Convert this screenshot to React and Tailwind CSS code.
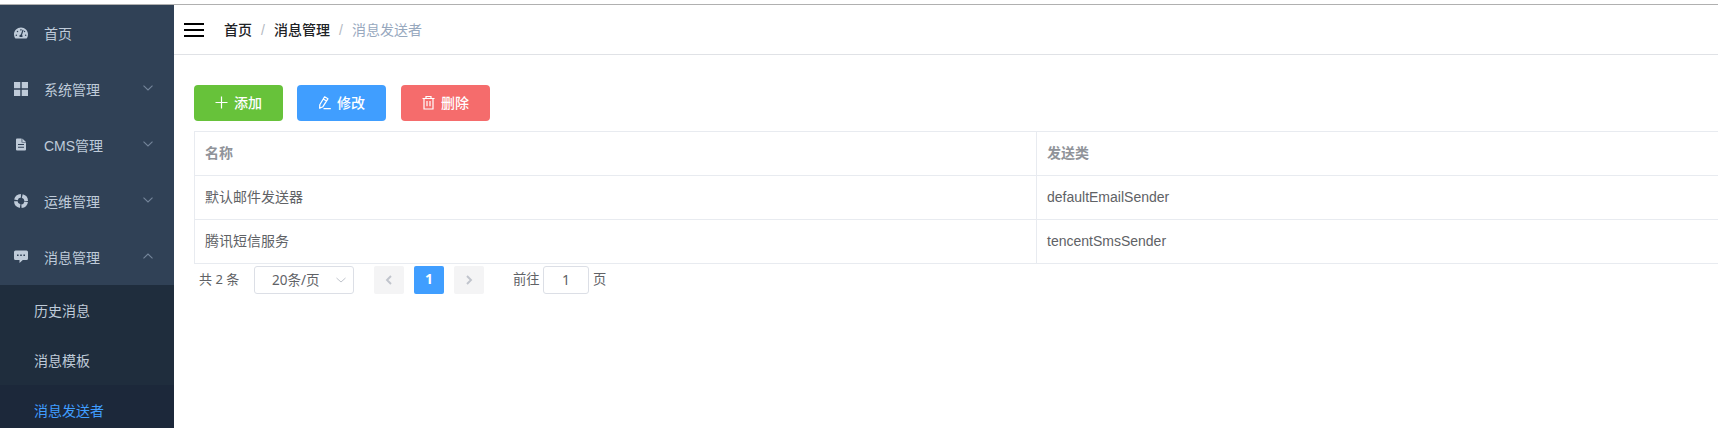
import { FaTachometerAlt } from "react-icons/fa";

const Chevron = ({ up }) => (
  <svg className="mb-0.5 h-3 w-3" viewBox="0 0 12 12" fill="none" stroke="#74859a" strokeWidth="1.1">
    <path d={up ? "M1.500 8.300L6 4l4.500 4.300" : "M1.500 3.700L6 8l4.500-4.300"} />
  </svg>
);

const Grid = () => (
  <svg className="h-3.5 w-3.5" viewBox="0 0 14 14" fill="#bfcbd9">
    <path d="M0 0h6.300v6.300H0zM7.700 0H14v6.300H7.700zM0 7.700h6.300V14H0zM7.700 7.700H14V14H7.700z" />
  </svg>
);

const Doc = () => (
  <svg className="h-3.5 w-3.5" viewBox="0 0 14 14" fill="#bfcbd9">
    <path fillRule="evenodd" d="M3 .5h4.600v4H12v7a1 1 0 0 1-1 1H3a1 1 0 0 1-1-1v-10a1 1 0 0 1 1-1zM4 6.100v1h6v-1zM4 8.800v1h6v-1z" />
    <path d="M8.300 .5L12 3.900H8.300z" />
  </svg>
);

const Ring = () => (
  <svg className="h-3.5 w-3.5" viewBox="0 0 14 14" fill="none" stroke="#bfcbd9" strokeWidth="3.600">
    <circle cx="7" cy="7" r="5.200" strokeDasharray="6.768 1.400" strokeDashoffset="-0.7" />
  </svg>
);

const Chat = () => (
  <svg className="h-3.5 w-3.5" viewBox="0 0 14 14">
    <path fill="#bfcbd9" d="M1.500 .5h11A1.500 1.500 0 0 1 14 2v6.500A1.500 1.500 0 0 1 12.500 10H8.800L5.500 13v-3h-4A1.500 1.500 0 0 1 0 8.500V2A1.500 1.500 0 0 1 1.500 .5z" />
    <path fill="#304156" d="M3 4.500h1.600v1.600H3zM6.200 4.500h1.600v1.600H6.200zM9.400 4.500H11v1.600H9.400z" />
  </svg>
);

const Plus = () => (
  <svg className="h-3.5 w-3.5" viewBox="0 0 14 14" fill="none" stroke="#fff" strokeWidth="1.200">
    <path d="M6.500 .5v12M.5 6.500h12" />
  </svg>
);

const Edit = () => (
  <svg className="h-3.5 w-3.5" viewBox="0 0 14 14" fill="none" stroke="#fff" strokeWidth="1.250" strokeLinejoin="round">
    <path d="M6.600 .8l3.300 2-5 7.900-3.200 1.600.1-3.600zM5.300 3l3.200 2M5.500 12.500h7.300" />
  </svg>
);

const Trash = () => (
  <svg className="h-3.5 w-3.5" viewBox="0 0 14 14" fill="none" stroke="#fff" strokeWidth="1.200">
    <path d="M.5 2.500h12M4 2.500v-2h5v2M2 2.500v10.500h9V2.500M5 5v5.300M8 5v5.300" />
  </svg>
);

const menu = [
  { label: "首页", icon: <FaTachometerAlt className="h-3.5 w-3.5" /> },
  { label: "系统管理", icon: <Grid />, arrow: true },
  { label: "CMS管理", icon: <Doc />, arrow: true },
  { label: "运维管理", icon: <Ring />, arrow: true },
  { label: "消息管理", icon: <Chat />, arrow: true, open: true },
];

const Button = ({ color, icon, children }) => (
  <button className={`flex h-9 w-[89px] items-center justify-center gap-[5px] rounded-[4px] text-white ${color}`}>
    {icon}
    <span>{children}</span>
  </button>
);

const Row = ({ cells, head }) => (
  <div className={`flex h-11 border-b border-[#e8ebf0] ${head ? "font-bold text-[#909399]" : ""}`}>
    <div className="flex w-[842px] items-center border-r border-[#e8ebf0] pb-0.5 pl-2.5">{cells[0]}</div>
    <div className="flex flex-1 items-center pb-0.5 pl-2.5">{cells[1]}</div>
  </div>
);

export default function App() {
  return (
    <div className="flex h-[428px] w-full flex-col overflow-hidden bg-white pt-1 font-['Liberation_Sans','Noto_Sans_CJK_SC',sans-serif] text-[14px] leading-5 text-[#606266]">
      <div className="h-px shrink-0 bg-[#b0b0b0]" />
      <div className="flex min-h-0 flex-1">
        <aside className="w-[174px] shrink-0 overflow-hidden bg-[#304156] text-[#bfcbd9]">
          {menu.map((m) => (
            <div key={m.label} className="flex h-14 items-center pr-5 pl-3.5">
              {m.icon}
              <span className="ml-4 flex-1 pt-0.5">{m.label}</span>
              {m.arrow && <Chevron up={m.open} />}
            </div>
          ))}
          <div className="bg-[#1f2d3d]">
            <div className="flex h-[50px] items-center pt-0.5 pl-[34px]">历史消息</div>
            <div className="flex h-[50px] items-center pt-0.5 pl-[34px]">消息模板</div>
            <div className="flex h-[50px] items-center bg-[#1c283a] pt-0.5 pl-[34px] text-[#409eff]">消息发送者</div>
          </div>
        </aside>
        <main className="min-w-0 flex-1">
          <header className="flex h-[50px] items-center border-b border-[#e0e2e6] pl-2.5">
            <div className="flex h-3.5 w-5 flex-col justify-between">
              <span className="h-0.5 bg-black" />
              <span className="h-0.5 bg-black" />
              <span className="h-0.5 bg-black" />
            </div>
            <nav className="ml-5 flex items-center">
              <span className="font-medium text-[#202225]">首页</span>
              <span className="w-[22px] text-center text-[#b4b9c2]">/</span>
              <span className="font-medium text-[#202225]">消息管理</span>
              <span className="w-[22px] text-center text-[#b4b9c2]">/</span>
              <span className="text-[#97a8be]">消息发送者</span>
            </nav>
          </header>
          <section className="pt-[30px] pl-5">
            <div className="flex font-medium">
              <Button color="bg-[#67c23a]" icon={<Plus />}>添加</Button>
              <Button color="ml-3.5 bg-[#409eff]" icon={<Edit />}>修改</Button>
              <Button color="ml-[15px] bg-[#f56c6c]" icon={<Trash />}>删除</Button>
            </div>
            <div className="mt-2.5 border-t border-l border-[#e8ebf0]">
              <Row head cells={["名称", "发送类"]} />
              <Row cells={["默认邮件发送器", "defaultEmailSender"]} />
              <Row cells={["腾讯短信服务", "tencentSmsSender"]} />
            </div>
            <div className="mt-0.5 flex h-7 items-center pl-[5px]">
              <span className="w-[55px] pb-0.5 font-['Noto_Sans','Noto_Sans_CJK_SC',sans-serif] text-[13px]">共 2 条</span>
              <div className="flex h-7 w-[100px] items-center justify-between rounded-[3px] border border-[#dcdfe6] pr-1.5 pl-[17px] font-['Noto_Sans','Noto_Sans_CJK_SC',sans-serif] text-[13.500px]">
                20条/页
                <svg className="h-3 w-3" viewBox="0 0 12 12" fill="none" stroke="#c0c4cc"><path d="M1.500 4L6 8l4.500-4" /></svg>
              </div>
              <div className="ml-5 flex h-7 w-[30px] items-center justify-center rounded-[2px] bg-[#f4f4f5]">
                <svg className="h-3 w-3" viewBox="0 0 12 12" fill="none" stroke="#c0c4cc" strokeWidth="1.900"><path d="M8 2L4 6l4 4" /></svg>
              </div>
              <div className="ml-2.5 flex h-7 w-[30px] items-center justify-center rounded-[2px] bg-[#409eff] pb-0.5 font-['Noto_Sans',sans-serif] text-[14px] font-bold text-white">1</div>
              <div className="ml-2.5 flex h-7 w-[30px] items-center justify-center rounded-[2px] bg-[#f4f4f5]">
                <svg className="h-3 w-3" viewBox="0 0 12 12" fill="none" stroke="#c0c4cc" strokeWidth="1.900"><path d="M4 2l4 4-4 4" /></svg>
              </div>
              <span className="ml-[29px] w-[30px] text-[13.300px]">前往</span>
              <div className="flex h-7 w-[46px] items-center justify-center rounded-[3px] border border-[#dcdfe6] font-['Noto_Sans',sans-serif]">1</div>
              <span className="ml-1 text-[13.300px]">页</span>
            </div>
          </section>
        </main>
      </div>
    </div>
  );
}
